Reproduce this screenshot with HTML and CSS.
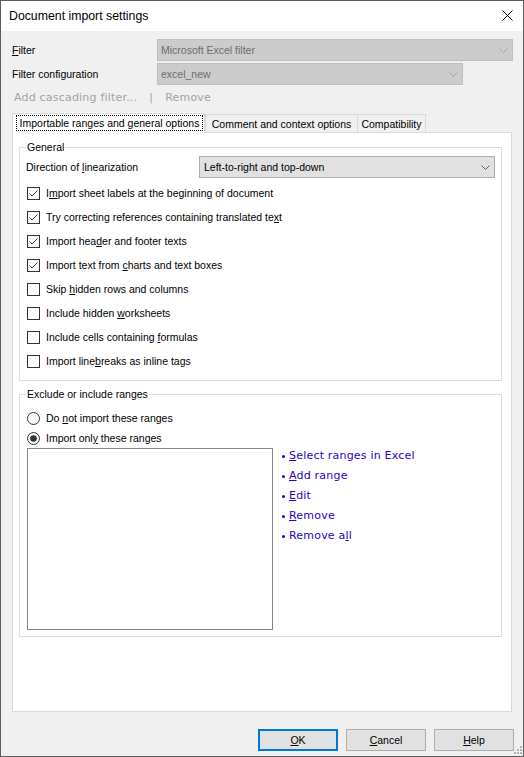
FILE: index.html
```html
<!DOCTYPE html>
<html>
<head>
<meta charset="utf-8">
<title>Document import settings</title>
<link rel="stylesheet" href="styles.css">
</head>
<body>
<div class="window">
  <div class="titlebar">
    <span class="title">Document import settings</span>
    <svg class="close" width="11" height="11" viewBox="0 0 11 11"><path d="M0.5 0.5 L10.5 10.5 M10.5 0.5 L0.5 10.5" stroke="#000" stroke-width="1" fill="none"/></svg>
  </div>
  <div class="content">
    <div class="field-row">
      <span class="field-label"><u>F</u>ilter</span>
      <div class="combo combo-wide"><span>Microsoft Excel filter</span><svg class="chev" width="9" height="5" viewBox="0 0 9 5"><path d="M0.5 0.5 L4.5 4.5 L8.5 0.5" stroke="#a6a6a6" fill="none"/></svg></div>
    </div>
    <div class="field-row">
      <span class="field-label">Filter configuration</span>
      <div class="combo combo-mid"><span>excel_new</span><svg class="chev" width="9" height="5" viewBox="0 0 9 5"><path d="M0.5 0.5 L4.5 4.5 L8.5 0.5" stroke="#a6a6a6" fill="none"/></svg></div>
    </div>
    <div class="cascade"><span>Add cascading filter...</span><span class="sep">|</span><span>Remove</span></div>
    <div class="tabs">
      <div class="tab tab-active"><span class="focus">Importable ranges and general options</span></div>
      <div class="tab tab-comment">Comment and context options</div>
      <div class="tab tab-compat">Compatibility</div>
    </div>
    <div class="panel">
      <fieldset class="group general">
        <legend>General</legend>
        <div class="dir-row">
          <span class="dir-label">Direction of <u>l</u>inearization</span>
          <div class="select"><span>Left-to-right and top-down</span><svg class="chev" width="9" height="5" viewBox="0 0 9 5"><path d="M0.5 0.5 L4.5 4.5 L8.5 0.5" stroke="#606060" fill="none"/></svg></div>
        </div>
        <div class="checks">
          <div class="check-row"><span class="box"><svg width="11" height="11" viewBox="0 0 11 11"><path d="M1.5 5.5 L4 8 L9.5 2.5" stroke="#333" fill="none"/></svg></span><span>I<u>m</u>port sheet labels at the beginning of document</span></div>
          <div class="check-row"><span class="box"><svg width="11" height="11" viewBox="0 0 11 11"><path d="M1.5 5.5 L4 8 L9.5 2.5" stroke="#333" fill="none"/></svg></span><span>Try correcting references containing translated te<u>x</u>t</span></div>
          <div class="check-row"><span class="box"><svg width="11" height="11" viewBox="0 0 11 11"><path d="M1.5 5.5 L4 8 L9.5 2.5" stroke="#333" fill="none"/></svg></span><span>Import hea<u>d</u>er and footer texts</span></div>
          <div class="check-row"><span class="box"><svg width="11" height="11" viewBox="0 0 11 11"><path d="M1.5 5.5 L4 8 L9.5 2.5" stroke="#333" fill="none"/></svg></span><span>Import text from <u>c</u>harts and text boxes</span></div>
          <div class="check-row"><span class="box"></span><span>Skip <u>h</u>idden rows and columns</span></div>
          <div class="check-row"><span class="box"></span><span>Include hidden <u>w</u>orksheets</span></div>
          <div class="check-row"><span class="box"></span><span>Include cells containing <u>f</u>ormulas</span></div>
          <div class="check-row"><span class="box"></span><span>Import line<u>b</u>reaks as inline tags</span></div>
        </div>
      </fieldset>
      <fieldset class="group ranges">
        <legend>Exclude or include ranges</legend>
        <div class="radio-list">
          <div class="radio-row"><svg class="radio" width="13" height="13" viewBox="0 0 13 13"><circle cx="6.5" cy="6.5" r="6" fill="#fff" stroke="#333"/></svg><span>Do <u>n</u>ot import these ranges</span></div>
          <div class="radio-row"><svg class="radio" width="13" height="13" viewBox="0 0 13 13"><circle cx="6.5" cy="6.5" r="6" fill="#fff" stroke="#333"/><circle cx="6.5" cy="6.5" r="3.3" fill="#333"/></svg><span>Import onl<u>y</u> these ranges</span></div>
        </div>
        <div class="list-area">
          <div class="listbox"></div>
          <div class="links">
            <div class="link"><span class="bullet"></span><span><u>S</u>elect ranges in Excel</span></div>
            <div class="link"><span class="bullet"></span><span><u>A</u>dd range</span></div>
            <div class="link"><span class="bullet"></span><span><u>E</u>dit</span></div>
            <div class="link"><span class="bullet"></span><span><u>R</u>emove</span></div>
            <div class="link"><span class="bullet"></span><span>Remove a<u>l</u>l</span></div>
          </div>
        </div>
      </fieldset>
    </div>
    <div class="buttons">
      <div class="btn btn-default"><span><u>O</u>K</span></div>
      <div class="btn"><span><u>C</u>ancel</span></div>
      <div class="btn"><span><u>H</u>elp</span></div>
    </div>
  </div>
  <svg class="grip" width="9" height="9" viewBox="0 0 9 9"><g fill="#b4b4b4"><rect x="7" y="1" width="2" height="2"/><rect x="4" y="4" width="2" height="2"/><rect x="7" y="4" width="2" height="2"/><rect x="1" y="7" width="2" height="2"/><rect x="4" y="7" width="2" height="2"/><rect x="7" y="7" width="2" height="2"/></g></svg>
</div>
</body>
</html>
```
FILE: styles.css
```css
* { box-sizing: border-box; }

body {
  margin: 0;
  font-family: "Liberation Sans", Arial, sans-serif;
  font-size: 10.5px;
  color: #000;
  background: #f0f0f0;
}

u { text-underline-offset: 1px; }

.window {
  width: 524px;
  height: 757px;
  border: 1px solid #5c5c5c;
  background: #f0f0f0;
  display: flex;
  flex-direction: column;
  position: relative;
}

.titlebar {
  height: 30px;
  flex: none;
  background: #fff;
  display: flex;
  padding-left: 8px;
}

.title {
  font-size: 12.3px;
  line-height: 30px;
}

.close {
  margin-left: auto;
  margin-right: 10px;
  margin-top: 9px;
}

.content {
  flex: 1;
  padding: 8px 9px 0 11px;
  display: flex;
  flex-direction: column;
}

.field-row {
  display: flex;
  align-items: center;
  height: 22px;
}

.field-row + .field-row { margin-top: 2px; }

.field-label { width: 145px; }

.combo {
  height: 22px;
  display: flex;
  align-items: center;
  justify-content: space-between;
  padding: 0 4px 0 3px;
  border: 1px solid #bfbfbf;
  background: #cccccc;
  color: #6d6d6d;
}

.combo-wide { width: 356px; }
.combo-mid { width: 306px; }

.chev { display: block; flex: none; }

.cascade {
  margin-top: 4px;
  height: 16px;
  display: flex;
  align-items: center;
  padding-left: 2px;
  font-family: "DejaVu Sans", Verdana, sans-serif;
  font-size: 11px;
  letter-spacing: 0.2px;
  color: #a3a3a3;
}

.sep { margin: 0 12px 0 12px; }

.tabs {
  margin-top: 8px;
  height: 19px;
  display: flex;
  align-items: flex-end;
  flex: none;
}

.tab {
  height: 18px;
  border: 1px solid #d9d9d9;
  border-bottom: none;
  display: flex;
  align-items: center;
  justify-content: center;
  background: #f0f0f0;
}

.tab-active {
  width: 193px;
  height: 20px;
  margin-bottom: -1px;
  background: #fff;
  position: relative;
  z-index: 1;
  padding: 1px 1px 0 3px;
  align-items: flex-start;
  justify-content: flex-start;
}

.focus {
  width: 187px;
  height: 16px;
  border: 1px dotted #000;
  display: flex;
  align-items: center;
  justify-content: center;
}

.tab-comment { width: 153px; }
.tab-compat { width: 68px; border-left: none; }

.panel {
  width: 500px;
  height: 580px;
  flex: none;
  border: 1px solid #d9d9d9;
  background: #fff;
}

.group {
  margin: 7px 9px 0 6px;
  border: 1px solid #dcdcdc;
  padding: 1px 6px 7px 6px;
  min-width: 0;
}

.group legend {
  padding: 0 1px;
  line-height: 15px;
}

.ranges {
  margin-top: 6px;
  padding-bottom: 6px;
}

.dir-row {
  display: flex;
  align-items: center;
  height: 22px;
}

.dir-label { width: 173px; }

.select {
  width: 296px;
  height: 22px;
  border: 1px solid #adadad;
  background: #e1e1e1;
  display: flex;
  align-items: center;
  justify-content: space-between;
  padding: 0 4px 0 4px;
}

.checks { margin-top: 3px; }

.check-row {
  height: 24px;
  display: flex;
  align-items: center;
}

.box {
  width: 13px;
  height: 13px;
  border: 1px solid #333;
  margin-left: 1px;
  margin-right: 6px;
  flex: none;
  background: #fff;
  display: flex;
}

.box svg { display: block; }

.radio-list { margin-top: 5px; }

.radio-row {
  height: 20px;
  display: flex;
  align-items: center;
}

.radio {
  display: block;
  flex: none;
  margin-left: 1px;
  margin-right: 6px;
}

.list-area {
  display: flex;
  align-items: flex-start;
}

.listbox {
  width: 246px;
  height: 182px;
  flex: none;
  border: 1px solid #868686;
  background: #fff;
  margin-left: 1px;
}

.links {
  margin-left: 9px;
  margin-top: 1px;
  display: flex;
  flex-direction: column;
  gap: 6px;
  font-family: "DejaVu Sans", Verdana, sans-serif;
  font-size: 11px;
  letter-spacing: 0.2px;
  color: #2a00c8;
}

.link {
  line-height: 14px;
  display: flex;
  align-items: center;
}

.bullet {
  width: 3px;
  height: 3px;
  border-radius: 50%;
  background: currentColor;
  margin-right: 4px;
  flex: none;
}

.buttons {
  margin-top: 17px;
  display: flex;
  justify-content: flex-end;
  gap: 8px;
}

.btn {
  width: 80px;
  height: 22px;
  border: 1px solid #adadad;
  background: #e1e1e1;
  display: flex;
  align-items: center;
  justify-content: center;
}

.btn-default { border: 2px solid #0078d7; }

.grip {
  position: absolute;
  right: 1px;
  bottom: 2px;
  display: block;
}
```
